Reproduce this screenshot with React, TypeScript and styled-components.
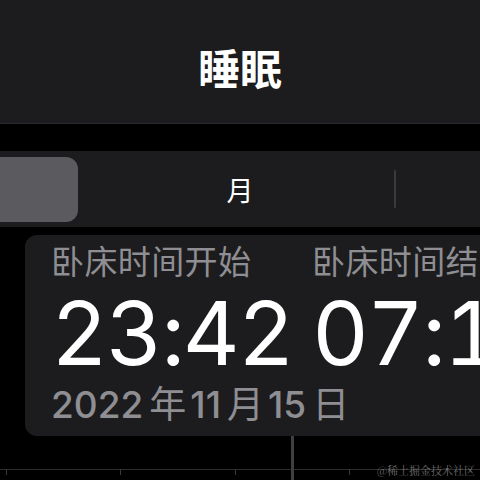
import styled, { createGlobalStyle } from 'styled-components';

const GlobalStyle = createGlobalStyle`
  html, body {
    margin: 0;
    padding: 0;
    background: #000;
  }
  body {
    font-family: Inter, "Noto Sans CJK SC", sans-serif;
    -webkit-font-smoothing: antialiased;
  }
`;

const Screen = styled.div`
  width: 480px;
  height: 480px;
  overflow: hidden;
  background: #000;
  display: flex;
  flex-direction: column;
`;

const NavBar = styled.header`
  height: 123px;
  flex-shrink: 0;
  background: #1c1c1e;
  border-bottom: 1px solid #2a2a2c;
  display: flex;
  align-items: center;
  justify-content: center;
`;

const NavTitle = styled.h1`
  margin: 9px 0 0;
  font-family: "Noto Sans CJK SC", sans-serif;
  font-size: 42px;
  font-weight: 700;
  color: #fff;
`;

const SegmentBar = styled.div`
  margin-top: 27px;
  height: 76px;
  flex-shrink: 0;
  background: #1c1c1e;
  overflow: hidden;
  display: grid;
  grid-template-columns: 78px 1fr 2px 84px;
  align-items: center;
`;

const SelectedSegment = styled.div`
  height: 65px;
  margin-left: -40px;
  border-radius: 12px;
  background: #5b5b5f;
`;

const Segment = styled.div`
  padding-left: 8px;
  text-align: center;
  font-family: "Noto Sans CJK SC", sans-serif;
  font-size: 27px;
  color: #fff;
`;

const SegmentDivider = styled.div`
  height: 38px;
  background: #3a3a3c;
  border-radius: 1px;
`;

const Card = styled.section`
  margin: 8px 0 0 25px;
  width: 520px;
  height: 201px;
  flex-shrink: 0;
  box-sizing: border-box;
  padding: 3px 0 0 26px;
  border-radius: 12px;
  background: #1c1c1e;
  display: grid;
  grid-template-columns: 261px auto;
  white-space: nowrap;
`;

const Column = styled.div`
  display: flex;
  flex-direction: column;
`;

const Label = styled.div`
  font-family: "Noto Sans CJK SC", sans-serif;
  font-size: 33px;
  line-height: 44px;
  letter-spacing: 0.4px;
  color: #8e8e93;
`;

const Time = styled.div`
  margin-top: 6px;
  font-family: Inter, sans-serif;
  font-size: 88px;
  line-height: 90px;
  font-weight: 400;
  font-variant-numeric: tabular-nums;
  letter-spacing: -2px;
  color: #fff;
`;

const DateText = styled.div`
  margin-top: 2px;
  font-family: Inter, sans-serif;
  font-size: 37px;
  font-weight: 500;
  line-height: 50px;
  color: #8e8e93;
`;

const DateUnit = styled.span`
  margin: 0 4px 0 6px;
  font-family: "Noto Sans CJK SC", sans-serif;
  font-size: 37px;
  font-weight: 400;
  line-height: 1;
`;

const Chart = styled.div`
  flex: 1;
  position: relative;
`;

const Axis = styled.div`
  position: absolute;
  left: 0;
  right: 0;
  top: 33px;
  height: 1px;
  background: #2c2c2e;
`;

const Tick = styled.div<{ $x: number }>`
  position: absolute;
  left: ${p => p.$x}px;
  top: 33px;
  width: 1px;
  height: 6px;
  background: #3a3a3c;
`;

const Cursor = styled.div`
  position: absolute;
  left: 291px;
  top: 0;
  bottom: 0;
  width: 3px;
  background: #3f3f42;
`;

const Watermark = styled.div`
  position: absolute;
  right: 5px;
  bottom: 2px;
  font-family: "Noto Serif CJK SC", "Noto Sans CJK SC", serif;
  font-size: 11px;
  color: rgba(180, 180, 180, 0.6);
`;

const ticks = [6, 120, 235, 349];

export default function App() {
  return (
    <>
      <GlobalStyle />
      <Screen>
        <NavBar>
          <NavTitle>睡眠</NavTitle>
        </NavBar>
        <SegmentBar>
          <SelectedSegment />
          <Segment>月</Segment>
          <SegmentDivider />
          <div />
        </SegmentBar>
        <Card>
          <Column>
            <Label>卧床时间开始</Label>
            <Time>23:42</Time>
            <DateText>
              2022<DateUnit>年</DateUnit>11<DateUnit>月</DateUnit>15<DateUnit>日</DateUnit>
            </DateText>
          </Column>
          <Column>
            <Label>卧床时间结束</Label>
            <Time>07:18</Time>
          </Column>
        </Card>
        <Chart>
          <Axis />
          {ticks.map(x => (
            <Tick key={x} $x={x} />
          ))}
          <Cursor />
          <Watermark>@稀土掘金技术社区</Watermark>
        </Chart>
      </Screen>
    </>
  );
}
